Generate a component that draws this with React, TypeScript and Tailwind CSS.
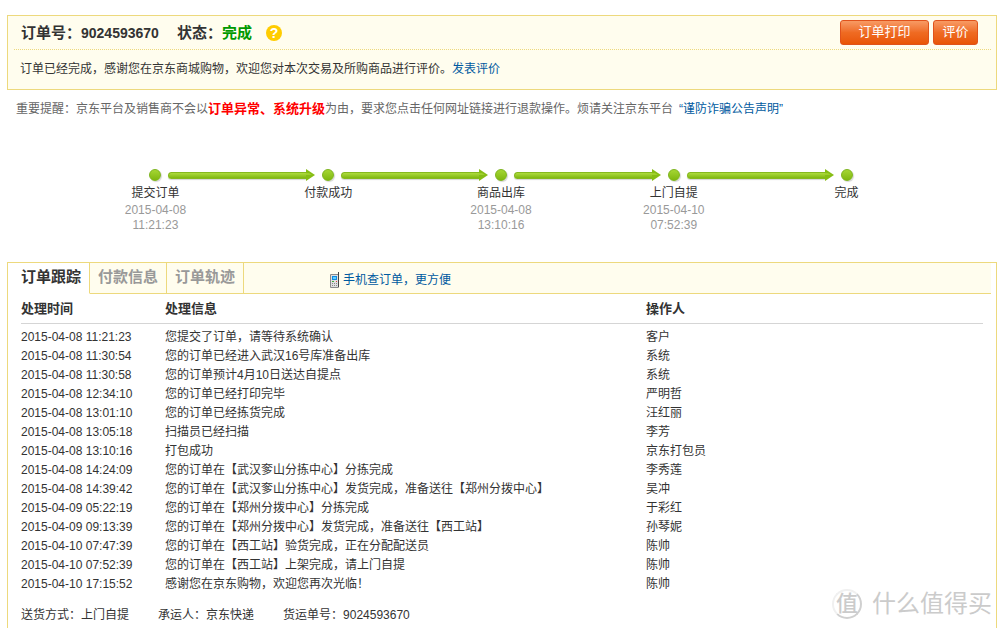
import { useState } from "react";

interface Step {
  name: string;
  date?: string;
  time?: string;
}

interface TrackRow {
  time: string;
  info: string;
  operator: string;
}

const steps: Step[] = [
  { name: "提交订单", date: "2015-04-08", time: "11:21:23" },
  { name: "付款成功" },
  { name: "商品出库", date: "2015-04-08", time: "13:10:16" },
  { name: "上门自提", date: "2015-04-10", time: "07:52:39" },
  { name: "完成" },
];

const tabs = ["订单跟踪", "付款信息", "订单轨迹"];

const rows: TrackRow[] = [
  { time: "2015-04-08 11:21:23", info: "您提交了订单，请等待系统确认", operator: "客户" },
  { time: "2015-04-08 11:30:54", info: "您的订单已经进入武汉16号库准备出库", operator: "系统" },
  { time: "2015-04-08 11:30:58", info: "您的订单预计4月10日送达自提点", operator: "系统" },
  { time: "2015-04-08 12:34:10", info: "您的订单已经打印完毕", operator: "严明哲" },
  { time: "2015-04-08 13:01:10", info: "您的订单已经拣货完成", operator: "汪红丽" },
  { time: "2015-04-08 13:05:18", info: "扫描员已经扫描", operator: "李芳" },
  { time: "2015-04-08 13:10:16", info: "打包成功", operator: "京东打包员" },
  { time: "2015-04-08 14:24:09", info: "您的订单在【武汉奓山分拣中心】分拣完成", operator: "李秀莲" },
  { time: "2015-04-08 14:39:42", info: "您的订单在【武汉奓山分拣中心】发货完成，准备送往【郑州分拨中心】", operator: "吴冲" },
  { time: "2015-04-09 05:22:19", info: "您的订单在【郑州分拨中心】分拣完成", operator: "于彩红" },
  { time: "2015-04-09 09:13:39", info: "您的订单在【郑州分拨中心】发货完成，准备送往【西工站】", operator: "孙琴妮" },
  { time: "2015-04-10 07:47:39", info: "您的订单在【西工站】验货完成，正在分配配送员", operator: "陈帅" },
  { time: "2015-04-10 07:52:39", info: "您的订单在【西工站】上架完成，请上门自提", operator: "陈帅" },
  { time: "2015-04-10 17:15:52", info: "感谢您在京东购物，欢迎您再次光临！", operator: "陈帅" },
];

const Dot = () => (
  <span className="w-3 h-3 shrink-0 rounded-full border border-[#7db41c] bg-linear-to-b from-[#a5d632] to-[#80b80c] shadow-[1px_1px_1px_#d5d5d5]" />
);

const Arrow = () => (
  <span className="flex flex-1 items-center mx-[7px]">
    <span className="flex-1 h-[7px] rounded-l-full border-y border-l border-[#86b91e] bg-linear-to-b from-[#aedb3c] to-[#80b80c] shadow-[0_1px_1px_#d5d5d5]" />
    <svg width="9" height="12" viewBox="0 0 9 12" aria-hidden="true">
      <path d="M0 0 L9 6 L0 12 Z" fill="#86bd14" />
      <path d="M0 4 L3 4 L6 6 L0 6 Z" fill="#9fd02c" />
    </svg>
  </span>
);

const PhoneIcon = () => (
  <svg width="10" height="16" viewBox="0 0 10 16" aria-hidden="true">
    <rect x="8" y="0" width="1" height="4" fill="#444" />
    <rect x="0" y="2" width="9" height="14" rx="1" fill="#8a8a8a" />
    <rect x="8" y="2" width="1" height="13" fill="#444" />
    <rect x="1" y="3" width="7" height="12" fill="#e0e0e0" />
    <rect x="2" y="4" width="5" height="4" fill="#1089e0" />
    <rect x="3" y="5" width="3" height="2" fill="#5fd0ff" />
    <rect x="2" y="9" width="2" height="1" fill="#42a83c" />
    <rect x="6" y="9" width="1" height="1" fill="#e0433a" />
    <g fill="#8a8a8a">
      <rect x="2" y="11" width="1" height="1" />
      <rect x="4" y="11" width="1" height="1" />
      <rect x="6" y="11" width="1" height="1" />
      <rect x="2" y="13" width="1" height="1" />
      <rect x="4" y="13" width="1" height="1" />
      <rect x="6" y="13" width="1" height="1" />
    </g>
  </svg>
);

const OrderHeader = () => (
  <section className="border border-[#edd97d] bg-[#fffdee] pl-1.5 pr-[5px]">
    <div className="flex items-center justify-between h-[34px] pl-[7px] pr-[13px] border-b border-dotted border-[#edd97d]">
      <h1 className="flex items-center text-[15px] leading-5 font-bold">
        <span>订单号：</span>
        <span className="text-[14px]">9024593670</span>
        <span className="ml-[18px]">状态：</span>
        <span className="text-[#090]">完成</span>
        <button
          type="button"
          aria-label="帮助"
          className="ml-3.5 size-4 rounded-full bg-[#fc0] text-white text-[14px] leading-4 text-center"
        >
          ?
        </button>
      </h1>
      <div className="flex items-start gap-1">
        <button
          type="button"
          className="w-[89px] h-[25px] pb-0.5 rounded-[3px] border border-[#e0521b] bg-linear-to-b from-[#f79a63] via-[#ef6b22] to-[#e95505] text-[13px] text-white leading-[21px]"
        >
          订单打印
        </button>
        <button
          type="button"
          className="w-[45px] h-[25px] pb-0.5 rounded-[3px] border border-[#e0521b] bg-linear-to-b from-[#f79a63] via-[#ef6b22] to-[#e95505] text-[13px] text-white leading-[21px]"
        >
          评价
        </button>
      </div>
    </div>
    <p className="pl-1.5 py-[10px] leading-[19px]">
      订单已经完成，感谢您在京东商城购物，欢迎您对本次交易及所购商品进行评价。
      <a href="#review" className="text-[#005aa0]">
        发表评价
      </a>
    </p>
  </section>
);

const Progress = () => (
  <section className="mt-[50px] ml-[62px] mr-16">
    <div className="px-[10%]">
      <div className="flex items-center -mx-1.5 h-3">
        {steps.map((step, index) => (
          <span key={step.name} className={index > 0 ? "flex flex-1 items-center" : "flex"}>
            {index > 0 && <Arrow />}
            <Dot />
          </span>
        ))}
      </div>
    </div>
    <ol className="grid grid-cols-5 mt-0.5 text-center">
      {steps.map((step) => (
        <li key={step.name}>
          <h3 className="leading-5">{step.name}</h3>
          <p className="text-[#999] leading-[15px]">
            {step.date}
            <br />
            {step.time}
          </p>
        </li>
      ))}
    </ol>
  </section>
);

const TrackTable = () => (
  <table className="w-full table-fixed text-left">
    <thead>
      <tr className="h-[29px] border-b border-[#d5d5d5] text-[13px]">
        <th className="w-36 font-bold">处理时间</th>
        <th className="w-1/2 font-bold">处理信息</th>
        <th className="font-bold">操作人</th>
      </tr>
    </thead>
    <tbody>
      <tr className="h-[5px]" aria-hidden="true" />
      {rows.map((row) => (
        <tr key={row.time} className="h-[19px] leading-[19px]">
          <td>{row.time}</td>
          <td>{row.info}</td>
          <td>{row.operator}</td>
        </tr>
      ))}
    </tbody>
  </table>
);

const Watermark = () => (
  <div className="absolute right-2 bottom-2 flex items-center gap-2.5 text-[#cbcbcb]">
    <span className="size-[30px] rounded-full border-2 border-[#d0d0d0] border-t-[#f0f0f0] border-l-[#f0f0f0] text-center text-[22px] leading-[26px] font-medium">
      值
    </span>
    <span className="text-[24px] leading-[34px]">什么值得买</span>
  </div>
);

export default function App() {
  const [active, setActive] = useState<number>(0);

  return (
    <div className="relative overflow-hidden bg-white pt-[15px] pl-[7px] pr-[3px] text-[12px] text-[#333] font-['Liberation_Sans','Noto_Sans_CJK_SC',sans-serif]">
      <OrderHeader />

      <p className="mt-[9px] pl-[9px] leading-[19px] text-[#666]">
        重要提醒：京东平台及销售商不会以
        <strong className="text-[13px] font-bold text-[#f00]">订单异常、系统升级</strong>
        为由，要求您点击任何网址链接进行退款操作。烦请关注京东平台
        <a href="#notice" className="ml-1.5 text-[#005aa0]">
          “谨防诈骗公告声明”
        </a>
      </p>

      <Progress />

      <section className="mt-[29px] border border-b-0 border-[#edd97d]">
        <div className="flex h-[31px] mr-[5px] bg-[#fffdee]">
          <div role="tablist" className="flex">
            {tabs.map((tab, index) => (
              <button
                key={tab}
                type="button"
                role="tab"
                aria-selected={active === index}
                onClick={() => setActive(index)}
                className={`${
                  active === index
                    ? "bg-white text-[#333] border-b-white pl-[13px] pr-2"
                    : "text-[#999] border-b-[#edd97d] px-2"
                } border-r border-b border-r-[#edd97d] pb-0.5 text-[15px] leading-[26px] font-bold`}
              >
                {tab}
              </button>
            ))}
          </div>
          <div className="flex flex-1 items-center border-b border-[#edd97d] pl-[86px]">
            <a href="#mobile" className="flex items-center gap-[3px] pt-1 text-[#005aa0]">
              <PhoneIcon />
              手机查订单，更方便
            </a>
          </div>
        </div>

        <div className="pl-[13px] pr-[13px]">
          <TrackTable />
          <ul className="flex gap-[29px] pt-3 pb-1 leading-[19px]">
            <li>送货方式：上门自提</li>
            <li>承运人：京东快递</li>
            <li>货运单号：9024593670</li>
          </ul>
        </div>
      </section>

      <Watermark />
    </div>
  );
}
